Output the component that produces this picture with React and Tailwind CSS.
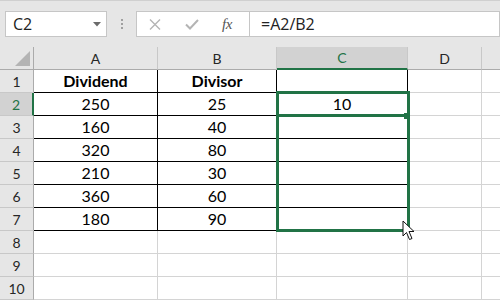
import React from "react";

const cols = [
  { key: "A", w: "w-[124px]" },
  { key: "B", w: "w-[119px]" },
  { key: "C", w: "w-[131px]" },
  { key: "D", w: "w-[74px]" },
];

const data = [
  ["Dividend", "Divisor", ""],
  ["250", "25", "10"],
  ["160", "40", ""],
  ["320", "80", ""],
  ["210", "30", ""],
  ["360", "60", ""],
  ["180", "90", ""],
];

const Toolbar = () => (
  <div className="h-[47px] border-t border-[#d0d0d0] flex items-start pt-[10px] pl-[5px]">
    {/* name box */}
    <div className="w-[102px] h-[26px] bg-white border border-[#c6c6c6] flex items-center pl-[7px] pr-[5px] font-['Open_Sans'] text-[16px] text-[#222]">
      <span className="flex-1">C2</span>
      <svg width="8" height="5" viewBox="0 0 8 5">
        <path d="M0 0 H8 L4 4.5 Z" fill="#6b6b6b" />
      </svg>
    </div>

    {/* grip dots */}
    <div className="ml-[14px] mt-[8px] flex flex-col gap-[2px]">
      <span className="w-[2px] h-[2px] bg-[#a0a0a0]" />
      <span className="w-[2px] h-[2px] bg-[#a0a0a0]" />
      <span className="w-[2px] h-[2px] bg-[#a0a0a0]" />
    </div>

    {/* formula bar */}
    <div className="ml-[13px] flex-1 h-[26px] bg-white border border-[#c6c6c6] flex">
      <div className="w-[112px] flex items-center">
        <svg className="ml-[12px]" width="12" height="11" viewBox="0 0 12 11">
          <path d="M1 0.5 L11 10.5 M11 0.5 L1 10.5" stroke="#b4b4b4" strokeWidth="1.4" />
        </svg>
        <svg className="ml-[24px]" width="14" height="11" viewBox="0 0 14 11">
          <path d="M1 5.5 L5 9.5 L13 1" stroke="#b4b4b4" strokeWidth="2" fill="none" />
        </svg>
        <span className="ml-[23px] font-['Liberation_Serif'] italic text-[15px] text-[#555] tracking-[-0.5px]">
          fx
        </span>
      </div>
      <div className="flex-1 border-l border-[#c6c6c6] flex items-center pl-[11px] font-['Open_Sans'] text-[16px] text-[#222]">
        =A2/B2
      </div>
    </div>
  </div>
);

const HeaderRow = () => (
  <div className="flex h-[23px] bg-[#e6e6e6] font-['Lato'] text-[14px] text-[#262626]">
    <div className="w-[34px] border-r border-b border-[#ababab] flex items-end justify-end pr-[3px] pb-[3px]">
      <svg width="15" height="15" viewBox="0 0 15 15">
        <path d="M15 0 V15 H0 Z" fill="#b4b4b4" />
      </svg>
    </div>
    {cols.map((c) =>
      c.key === "C" ? (
        <div
          key={c.key}
          className={`${c.w} bg-[#d2d2d2] border-r border-[#c8c8c8] border-b-2 border-b-[#217346] text-[#217346] flex items-center justify-center`}
        >
          {c.key}
        </div>
      ) : (
        <div
          key={c.key}
          className={`${c.w} border-r border-[#c8c8c8] border-b border-b-[#ababab] flex items-center justify-center`}
        >
          {c.key}
        </div>
      )
    )}
    <div className="flex-1 border-b border-[#ababab]" />
  </div>
);

const Row = ({ n }) => {
  const vals = data[n - 1];
  const active = n === 2;
  return (
    <div className="flex h-[23px] bg-white font-['Lato'] text-[16px] text-black">
      <div
        className={`w-[34px] flex items-center justify-center text-[14px] border-b border-[#c8c8c8] ${
          active
            ? "bg-[#d2d2d2] text-[#217346] border-r-2 border-r-[#217346]"
            : "bg-[#e6e6e6] text-[#262626] border-r border-r-[#ababab]"
        }`}
      >
        {n}
      </div>
      {cols.map((c, i) => {
        const inTable = vals && i < 3;
        return (
          <div
            key={c.key}
            className={`${c.w} border-r border-b flex items-center justify-center ${
              inTable ? "border-black" : "border-[#d4d4d4]"
            } ${n === 1 ? "font-bold" : ""}`}
          >
            {inTable ? vals[i] : ""}
          </div>
        );
      })}
      <div className="flex-1 border-b border-[#d4d4d4]" />
    </div>
  );
};

export default function App() {
  return (
    <div className="w-[500px] h-[300px] overflow-hidden bg-[#e6e6e6]">
      <Toolbar />
      <div className="relative">
        <HeaderRow />
        {[1, 2, 3, 4, 5, 6, 7, 8, 9, 10].map((n) => (
          <Row key={n} n={n} />
        ))}

        {/* selection C2:C7 */}
        <div className="absolute left-[276px] top-[44px] w-[134px] h-[141px] border-[3px] border-[#217346]" />
        {/* active cell bottom edge + fill handle */}
        <div className="absolute left-[279px] top-[67px] w-[128px] h-[3px] bg-[#217346]" />
        <div className="absolute left-[404px] top-[66px] w-[6px] h-[6px] bg-[#217346]" />

        {/* mouse pointer */}
        <svg
          className="absolute left-[402px] top-[173px]"
          width="14"
          height="21"
          viewBox="0 0 14 21"
        >
          <path
            d="M1 1 L1 16 L4.5 12.5 L7.5 19.5 L10 18.5 L7 11.5 L12 11.5 Z"
            fill="white"
            stroke="#111"
            strokeWidth="1"
            strokeLinejoin="round"
          />
        </svg>
      </div>
    </div>
  );
}
